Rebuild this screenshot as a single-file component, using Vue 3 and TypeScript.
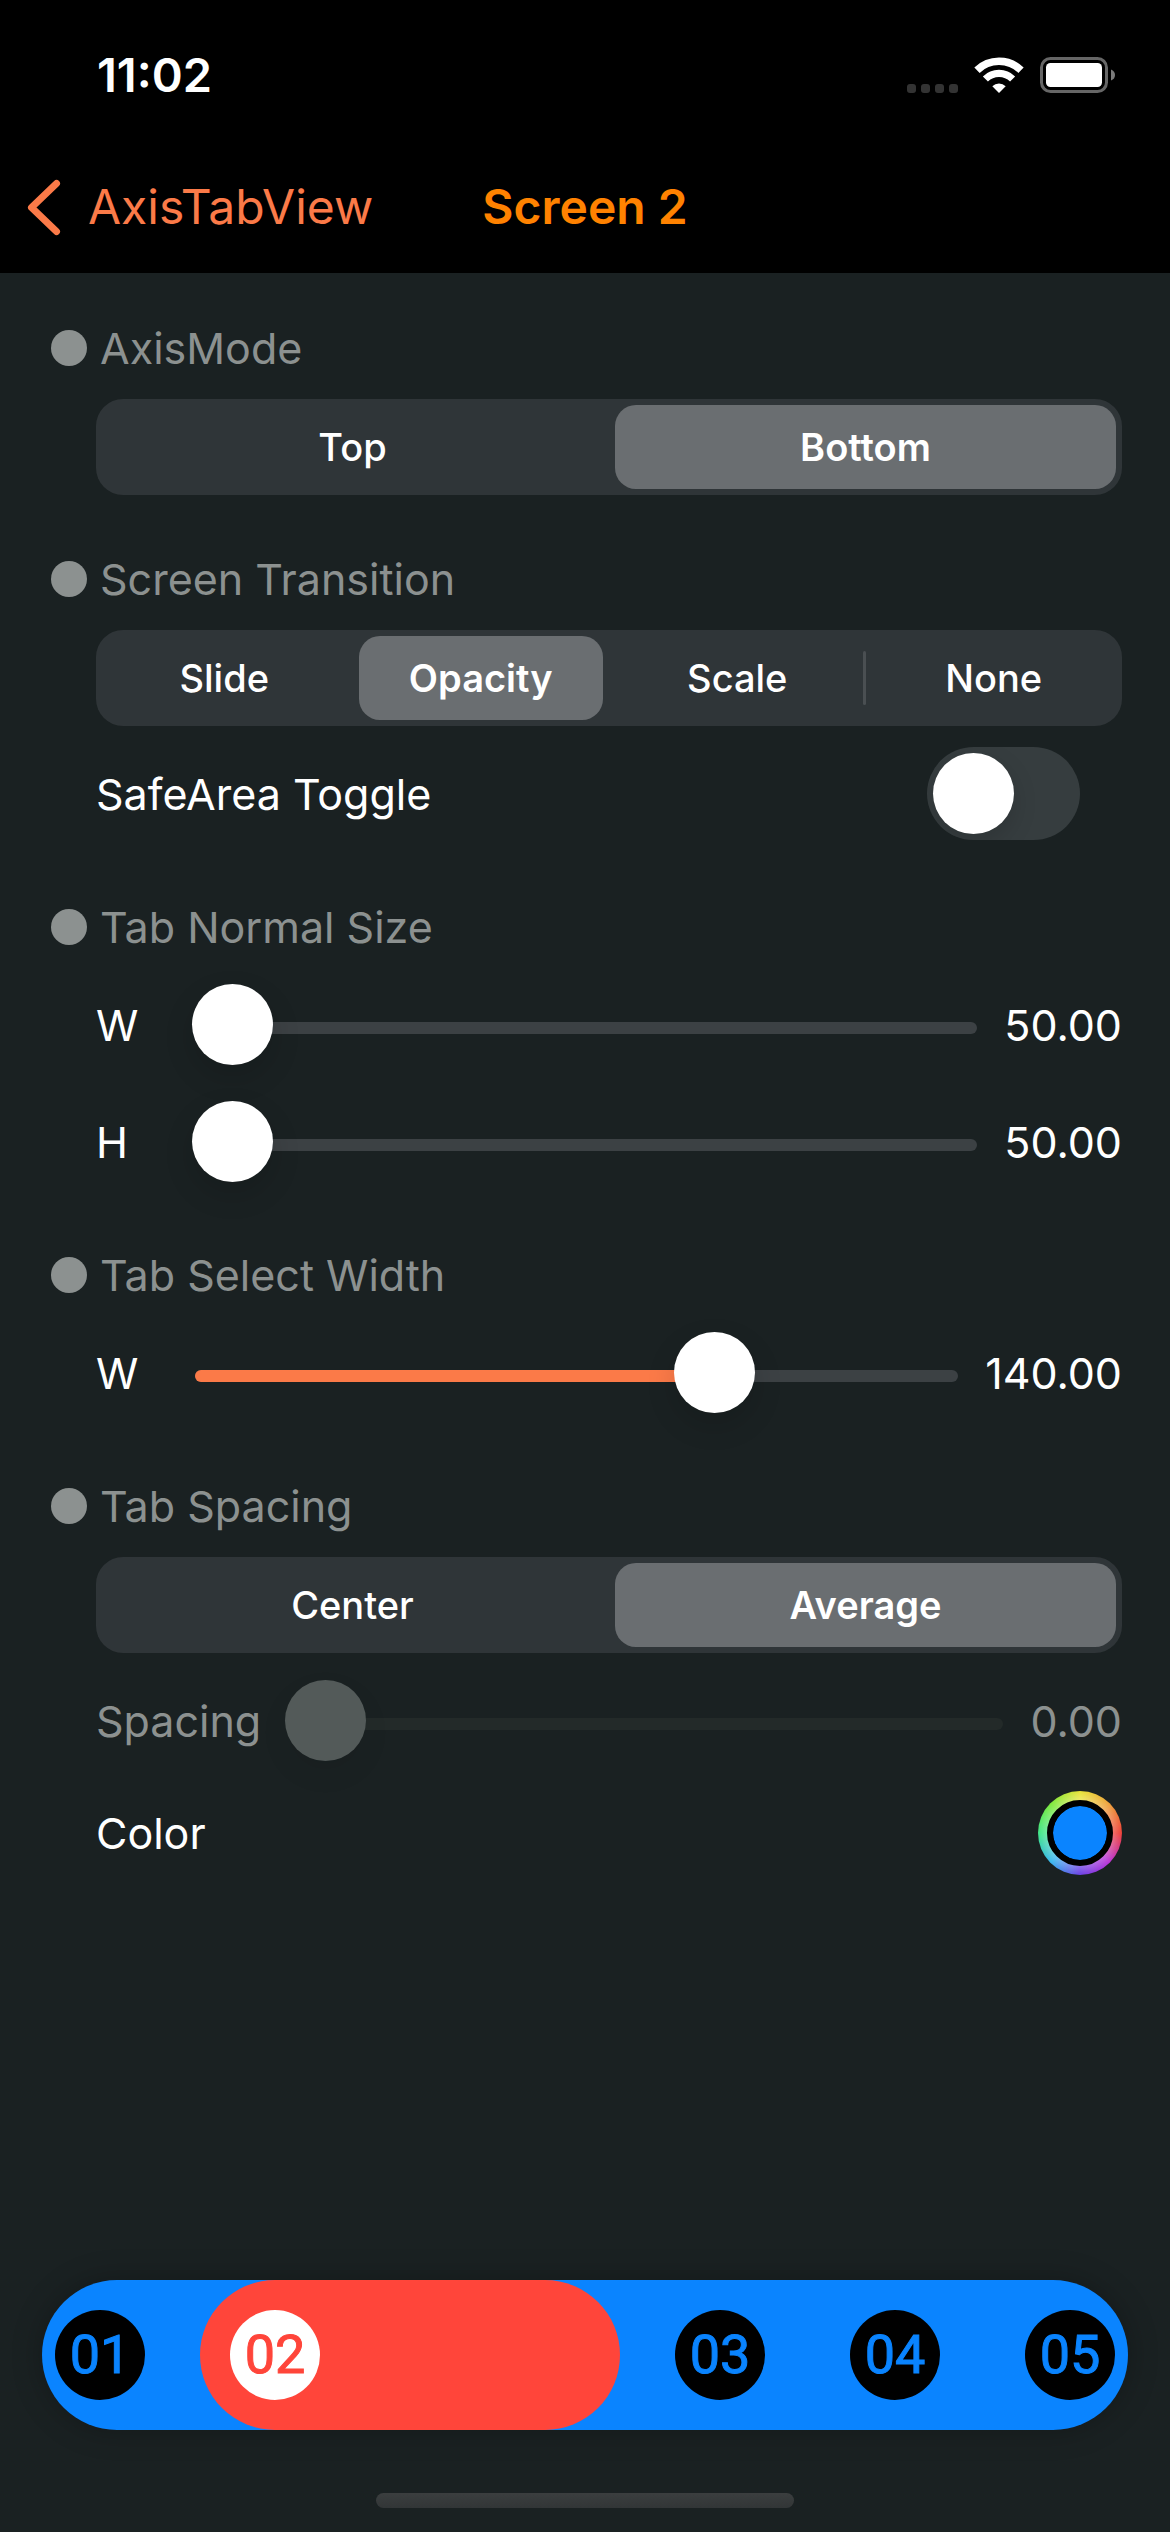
<script setup lang="ts">
import { computed, ref } from 'vue'

interface Tab {
  id: number
  label: string
}

const axisModes = ['Top', 'Bottom']
const transitions = ['Slide', 'Opacity', 'Scale', 'None']
const spacingModes = ['Center', 'Average']
const tabs: Tab[] = [1, 2, 3, 4, 5].map((id) => ({ id, label: `0${id}` }))

const axisMode = ref('Bottom')
const transition = ref('Opacity')
const spacingMode = ref('Average')
const safeArea = ref(false)
const normalWidth = ref(50)
const normalHeight = ref(50)
const selectWidth = ref(140)
const spacing = ref(0)
const color = ref('#0a84ff')
const selectedTab = ref(2)

const spacingDisabled = computed(() => spacingMode.value === 'Average')
const selectFill = computed(() => `${((selectWidth.value - 70) / 100) * 100}%`)

// A divider shows only between two segments that are both unselected.
function hasDivider(options: string[], index: number, selected: string): boolean {
  return index > 0 && options[index] !== selected && options[index - 1] !== selected
}
</script>

<template>
  <div class="screen">
    <header class="top">
      <div class="status">
        <span class="time">11:02</span>
        <div class="indicators">
          <svg class="signal" width="51" height="36" viewBox="0 0 51 36" aria-hidden="true">
            <rect x="0" y="27" width="9" height="9" rx="3" />
            <rect x="14" y="27" width="9" height="9" rx="3" />
            <rect x="28" y="27" width="9" height="9" rx="3" />
            <rect x="42" y="27" width="9" height="9" rx="3" />
          </svg>
          <svg width="50" height="36" viewBox="0 0 50 36" aria-hidden="true">
            <g fill="none" stroke="#fff">
              <path d="M3 13.2 A31.5 31.5 0 0 1 47 13.2" stroke-width="7.6" />
              <path d="M11.4 22 A19.4 19.4 0 0 1 38.600 22" stroke-width="7.200" />
            </g>
            <path d="M25 36 L18.300 29.200 A9.600 9.600 0 0 1 31.700 29.200 Z" fill="#fff" />
          </svg>
          <svg width="76" height="36" viewBox="0 0 76 36" aria-hidden="true">
            <rect x="1.500" y="1.500" width="65" height="33" rx="9" fill="none" stroke="#666" stroke-width="3" />
            <rect x="6" y="6" width="56" height="24" rx="4.500" fill="#fff" />
            <path d="M71 12.500 Q75 14 75 18 Q75 22 71 23.500 Z" fill="#7b7b7b" />
          </svg>
        </div>
      </div>
      <nav class="nav">
        <a class="back" href="#">
          <svg width="34" height="57" viewBox="0 0 34 57" aria-hidden="true">
            <path d="M29.500 4.500 L4.500 28.500 L29.500 52.500" />
          </svg>
          <span>AxisTabView</span>
        </a>
        <h1>Screen 2</h1>
      </nav>
    </header>

    <main class="form">
      <section>
        <h2>AxisMode</h2>
        <div class="segmented" role="radiogroup" aria-label="AxisMode">
          <label
            v-for="(option, i) in axisModes"
            :key="option"
            :class="{ on: option === axisMode, divided: hasDivider(axisModes, i, axisMode) }"
          >
            <input v-model="axisMode" type="radio" name="axis" :value="option" />{{ option }}
          </label>
        </div>
      </section>

      <section>
        <h2>Screen Transition</h2>
        <div class="segmented" role="radiogroup" aria-label="Screen Transition">
          <label
            v-for="(option, i) in transitions"
            :key="option"
            :class="{ on: option === transition, divided: hasDivider(transitions, i, transition) }"
          >
            <input v-model="transition" type="radio" name="transition" :value="option" />{{ option }}
          </label>
        </div>
        <div class="row toggle-row">
          <label for="safe-area">SafeArea Toggle</label>
          <input id="safe-area" v-model="safeArea" class="switch" type="checkbox" role="switch" />
        </div>
      </section>

      <section>
        <h2>Tab Normal Size</h2>
        <div class="row">
          <label for="normal-w">W</label>
          <div class="slider">
            <div class="track"></div>
            <input id="normal-w" v-model.number="normalWidth" type="range" min="50" max="100" />
          </div>
          <output for="normal-w">{{ normalWidth.toFixed(2) }}</output>
        </div>
        <div class="row">
          <label for="normal-h">H</label>
          <div class="slider">
            <div class="track"></div>
            <input id="normal-h" v-model.number="normalHeight" type="range" min="50" max="100" />
          </div>
          <output for="normal-h">{{ normalHeight.toFixed(2) }}</output>
        </div>
      </section>

      <section>
        <h2>Tab Select Width</h2>
        <div class="row">
          <label for="select-w">W</label>
          <div class="slider">
            <div class="track"><div class="fill" :style="{ width: selectFill }"></div></div>
            <input id="select-w" v-model.number="selectWidth" type="range" min="70" max="170" />
          </div>
          <output for="select-w">{{ selectWidth.toFixed(2) }}</output>
        </div>
      </section>

      <section>
        <h2>Tab Spacing</h2>
        <div class="segmented" role="radiogroup" aria-label="Tab Spacing">
          <label
            v-for="(option, i) in spacingModes"
            :key="option"
            :class="{ on: option === spacingMode, divided: hasDivider(spacingModes, i, spacingMode) }"
          >
            <input v-model="spacingMode" type="radio" name="spacing-mode" :value="option" />{{ option }}
          </label>
        </div>
        <div class="row" :class="{ disabled: spacingDisabled }">
          <label for="spacing">Spacing</label>
          <div class="slider">
            <div class="track"></div>
            <input
              id="spacing"
              v-model.number="spacing"
              type="range"
              min="0"
              max="30"
              :disabled="spacingDisabled"
            />
          </div>
          <output for="spacing">{{ spacing.toFixed(2) }}</output>
        </div>
        <div class="row color-row">
          <label for="color">Color</label>
          <span class="wheel"><input id="color" v-model="color" type="color" /></span>
        </div>
      </section>
    </main>

    <footer class="bottom">
      <div class="tabbar" role="tablist">
        <button
          v-for="tab in tabs"
          :key="tab.id"
          type="button"
          role="tab"
          :aria-selected="tab.id === selectedTab"
          :class="{ selected: tab.id === selectedTab }"
          @click="selectedTab = tab.id"
        >
          <span>{{ tab.label }}</span>
        </button>
      </div>
      <div class="home"></div>
    </footer>
  </div>
</template>

<style>
body {
  background: #1a2122;
}
</style>

<style scoped>
.screen {
  display: flex;
  flex-direction: column;
  min-height: 100vh;
  background: #1a2122;
  color: #fff;
  font-family: Inter, "Liberation Sans", sans-serif;
  font-size: 43px;
  line-height: 54px;
}

/* Status bar and navigation */
.top {
  background: #000;
}
.status {
  display: flex;
  align-items: center;
  justify-content: space-between;
  box-sizing: border-box;
  height: 141px;
  padding: 8px 54px 0 97px;
}
.time {
  font-size: 47px;
  font-weight: 600;
}
.indicators {
  display: flex;
  align-items: center;
  gap: 16px;
}
.indicators svg {
  display: block;
}
.signal {
  fill: #333;
}
.nav {
  display: grid;
  grid-template-columns: 1fr auto 1fr;
  align-items: center;
  height: 132px;
  padding: 0 27px;
  font-size: 48px;
  line-height: 60px;
}
.back {
  display: flex;
  align-items: center;
  gap: 27px;
  color: #fb7a48;
  text-decoration: none;
}
.back path {
  fill: none;
  stroke: #fb7a48;
  stroke-width: 7;
  stroke-linecap: round;
  stroke-linejoin: round;
}
h1 {
  margin: 0;
  color: #ff8200;
  font-size: 48px;
  font-weight: 600;
}

/* Settings form */
.form {
  display: flex;
  flex-direction: column;
  gap: 60px;
  padding: 48px 48px 60px 51px;
}
section {
  display: flex;
  flex-direction: column;
  gap: 24px;
}
h2 {
  display: flex;
  align-items: center;
  gap: 13px;
  margin: 0;
  color: #8c9190;
  font-size: 43px;
  font-weight: 400;
}
h2::before {
  content: "";
  width: 36px;
  height: 36px;
  border-radius: 50%;
  background: #8c9190;
}
.segmented,
.row {
  margin-left: 45px;
}
.segmented {
  display: flex;
  gap: 12px;
  box-sizing: border-box;
  height: 96px;
  margin-bottom: -3px;
  padding: 6px;
  border-radius: 27px;
  background: #2f3538;
}
.segmented label {
  position: relative;
  display: flex;
  flex: 1 1 0;
  align-items: center;
  justify-content: center;
  border-radius: 21px;
  font-size: 38px;
  font-weight: 500;
}
.segmented label.on {
  background: #6a6e71;
  font-weight: 600;
}
.segmented label.divided::before {
  content: "";
  position: absolute;
  top: 15px;
  left: -9px;
  width: 3px;
  height: 54px;
  border-radius: 2px;
  background: #4a4f52;
}
.segmented input {
  position: absolute;
  margin: 0;
  opacity: 0;
}
.row {
  display: flex;
  align-items: center;
  gap: 24px;
  height: 93px;
}
.row label {
  min-width: 72px;
}
.toggle-row {
  justify-content: space-between;
  padding-right: 42px;
}
.switch {
  appearance: none;
  box-sizing: border-box;
  width: 153px;
  height: 93px;
  margin: 0;
  padding: 6px;
  border-radius: 47px;
  overflow: hidden;
  background: #363d3f;
}
.switch::before {
  content: "";
  display: block;
  width: 81px;
  height: 81px;
  border-radius: 50%;
  background: #fff;
  box-shadow: 0 9px 24px rgba(0, 0, 0, 0.15);
}
.switch:checked {
  background: #fb7a48;
}
.switch:checked::before {
  margin-left: 60px;
}
.slider {
  display: grid;
  flex: 1;
  align-items: center;
}
.slider > * {
  grid-area: 1 / 1;
}
.track {
  height: 12px;
  margin: 7px 3px 0;
  overflow: hidden;
  border-radius: 6px;
  background: #3c4144;
}
.fill {
  height: 100%;
  background: #fb7a48;
}
.slider input {
  appearance: none;
  width: 100%;
  height: 81px;
  margin: 0;
  background: transparent;
}
.slider input::-webkit-slider-thumb {
  appearance: none;
  width: 81px;
  height: 81px;
  border-radius: 50%;
  background: #fff;
  box-shadow: 0 12px 30px rgba(0, 0, 0, 0.14);
}
.disabled {
  color: #8c9190;
}
.disabled .track {
  background: #232a29;
}
.disabled .slider input::-webkit-slider-thumb {
  background: #535a59;
  box-shadow: 0 12px 30px rgba(0, 0, 0, 0.06);
}
.color-row {
  justify-content: space-between;
  height: 84px;
}
.wheel {
  display: flex;
  padding: 9px;
  border-radius: 50%;
  background:
    radial-gradient(circle, rgba(255, 255, 255, 0.25) 33px, transparent 42px),
    conic-gradient(#e8e337, #eda03a 45deg, #ee3f37 90deg, #b833d6 135deg, #6a3fe4 180deg, #38b6ee 225deg, #3ee586 270deg, #7be83a 315deg, #e8e337);
}
.wheel input {
  appearance: none;
  box-sizing: border-box;
  width: 66px;
  height: 66px;
  padding: 0;
  overflow: hidden;
  border: 6px solid #000;
  border-radius: 50%;
  background: #000;
}
.wheel input::-webkit-color-swatch-wrapper {
  padding: 0;
}
.wheel input::-webkit-color-swatch {
  border: 0;
  border-radius: 50%;
}

/* Tab bar */
.bottom {
  display: flex;
  flex-direction: column;
  gap: 63px;
  margin-top: auto;
  padding: 0 42px 24px;
}
.tabbar {
  display: flex;
  align-items: center;
  justify-content: space-between;
  height: 150px;
  padding: 0 13px;
  border-radius: 75px;
  background: #0a84ff;
  box-shadow: 0 0 30px rgba(0, 0, 0, 0.25);
}
.tabbar button {
  padding: 0;
  border: 0;
  background: none;
}
.tabbar span {
  display: block;
  width: 90px;
  border-radius: 50%;
  background: #000;
  color: #0a84ff;
  font-family: Roboto, sans-serif;
  font-size: 54px;
  line-height: 90px;
  text-align: center;
  -webkit-text-stroke: 1px currentColor;
}
.tabbar .selected {
  width: 420px;
  height: 150px;
  margin: 0 -30px;
  padding-left: 30px;
  border-radius: 75px;
  background: #ff453a;
}
.tabbar .selected span {
  background: #fff;
  color: #ff453a;
}
.home {
  align-self: center;
  width: 418px;
  height: 15px;
  border-radius: 8px;
  background: linear-gradient(#3b3e3f, #323637);
}
</style>
